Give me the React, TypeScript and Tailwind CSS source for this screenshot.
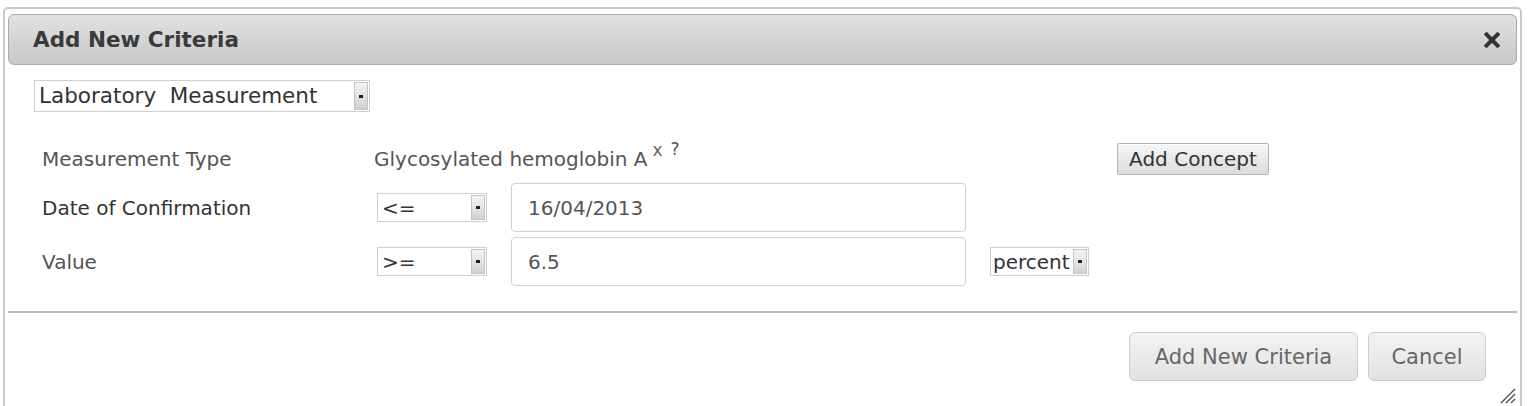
type SelectProps = {
  value: string;
  width: string;
  height: string;
  text?: string;
};

// Small legacy-styled dropdown: plain value box with a narrow grey arrow cap
function FakeSelect({ value, width, height, text = "text-[20px]" }: SelectProps) {
  return (
    <div
      className={`${width} ${height} flex shrink-0 items-stretch border border-[#cfcfcf] bg-white`}
    >
      <span className={`flex flex-1 items-center overflow-hidden pl-[4px] leading-none text-[#333] ${text}`}>
        {value}
      </span>
      <span className="my-[1px] mr-[1px] flex w-[14px] items-center justify-center border border-[#c4c4c4] bg-gradient-to-b from-[#f4f4f4] to-[#d2d2d2]">
        <span className="h-[3px] w-[4px] bg-[#222]" />
      </span>
    </div>
  );
}

function CloseIcon() {
  return (
    <svg viewBox="0 0 16 16" className="h-[16px] w-[16px]" fill="none" stroke="#333" strokeWidth="4" strokeLinecap="square">
      <path d="M2.5 2.5 L13.5 13.5" />
      <path d="M13.5 2.5 L2.5 13.5" />
    </svg>
  );
}

function ResizeGrip() {
  return (
    <svg
      className="absolute bottom-[1px] right-[4px] h-[18px] w-[18px]"
      viewBox="0 0 18 18"
      fill="none"
      stroke="#555"
      strokeWidth="1.4"
    >
      <path d="M3 17 L17 3" />
      <path d="M8 17 L17 8" />
      <path d="M13 17 L17 13" />
    </svg>
  );
}

export default function App() {
  return (
    <div className="h-[406px] overflow-hidden bg-white pl-[3px] pt-[7px] font-['DejaVu_Sans',sans-serif]">
      <div className="relative h-[420px] w-[1519px] rounded-t-[5px] border-2 border-[#c9c9c9] px-[3px] pt-[5px]">
        {/* title bar */}
        <div className="flex h-[51px] items-center justify-between rounded-[6px] border border-[#ababab] bg-gradient-to-b from-[#e1e2e4] to-[#c6c7c9] pl-[24px] pr-[16px]">
          <h2 className="pt-[1px] text-[21.5px] font-bold text-[#3a3a3a]">Add New Criteria</h2>
          <button type="button" aria-label="close">
            <CloseIcon />
          </button>
        </div>

        <div className="ml-[26px] mt-[15px]">
          <FakeSelect
            value="Laboratory  Measurement"
            width="w-[336px]"
            height="h-[32px]"
            text="text-[21.5px] whitespace-pre"
          />
        </div>

        <div className="ml-[34px] mt-[31px] flex flex-col">
          {/* measurement type */}
          <div className="flex h-[32px] items-center">
            <span className="w-[332px] text-[20px] text-[#555]">Measurement Type</span>
            <span className="flex w-[743px] items-center text-[20px] text-[#555]">
              Glycosylated hemoglobin A
              <span className="relative -top-[8px] ml-[5px] text-[17px] text-[#666]">x</span>
              <span className="relative -top-[9px] ml-[8px] text-[17px] text-[#555]">?</span>
            </span>
            <button
              type="button"
              className="h-[32px] w-[152px] rounded-[2px] border border-[#b4b4b4] bg-gradient-to-b from-[#f6f6f6] to-[#dcdcdc] text-[20px] text-[#333] shadow-[inset_0_1px_0_#fff]"
            >
              Add Concept
            </button>
          </div>

          {/* date of confirmation */}
          <div className="mt-[8px] flex h-[49px] items-center">
            <span className="w-[335px] text-[20px] text-[#333]">Date of Confirmation</span>
            <FakeSelect value="<=" width="w-[110px]" height="h-[29px]" />
            <div className="ml-[24px] flex h-[49px] w-[455px] items-center rounded-[4px] border border-[#cfcfcf] bg-white pl-[16px] text-[20px] text-[#555]">
              16/04/2013
            </div>
          </div>

          {/* value */}
          <div className="mt-[5px] flex h-[49px] items-center">
            <span className="w-[335px] text-[20px] text-[#555]">Value</span>
            <FakeSelect value=">=" width="w-[110px]" height="h-[29px]" />
            <div className="ml-[24px] flex h-[49px] w-[455px] items-center rounded-[4px] border border-[#cfcfcf] bg-white pl-[16px] text-[20px] text-[#555]">
              6.5
            </div>
            <div className="ml-[24px]">
              <FakeSelect value="percent" width="w-[99px]" height="h-[29px]" text="text-[20px] !pl-[2px]" />
            </div>
          </div>
        </div>

        <div className="mt-[25px] h-[2px] bg-[#b9b9b9]" />

        {/* footer actions */}
        <div className="mr-[31px] mt-[19px] flex justify-end gap-[10px]">
          <button
            type="button"
            className="h-[49px] w-[229px] rounded-[6px] border border-[#cdcdcd] bg-gradient-to-b from-[#f3f3f3] to-[#e2e2e2] pt-[2px] text-[21px] text-[#666]"
          >
            Add New Criteria
          </button>
          <button
            type="button"
            className="h-[49px] w-[118px] rounded-[6px] border border-[#cdcdcd] bg-gradient-to-b from-[#f3f3f3] to-[#e2e2e2] pt-[2px] text-[21px] text-[#666]"
          >
            Cancel
          </button>
        </div>

        <div className="absolute right-0 top-[374px] h-[22px] w-[22px]">
          <ResizeGrip />
        </div>
      </div>
    </div>
  );
}
